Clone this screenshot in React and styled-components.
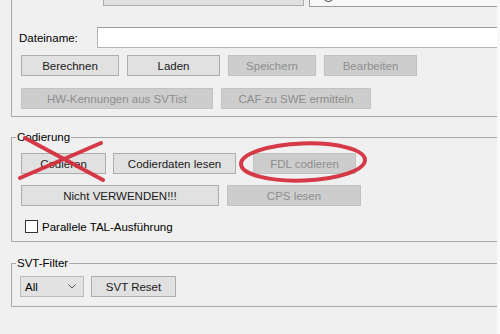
import styled, { createGlobalStyle } from 'styled-components';

const Global = createGlobalStyle`
  html, body {
    margin: 0;
    padding: 0;
    background: #f9f9f9;
  }
`;

const Page = styled.div`
  position: relative;
  width: 497px;
  height: 334px;
  overflow: hidden;
  box-sizing: border-box;
  padding-left: 11px;
  background: #f0f0f0;
  font-family: "Liberation Sans", Arial, sans-serif;
  font-size: 11.5px;
  color: #000;
`;

const TopGroup = styled.div`
  width: 520px;
  border-left: 1px solid #a9a9a9;
  border-bottom: 1px solid #a9a9a9;
  padding: 0 0 7px 9px;
`;

const Row = styled.div`
  display: flex;
  align-items: center;
  gap: 8px;
  margin-top: ${p => p.$mt || 0}px;
`;

const TopRow = styled.div`
  display: flex;
  height: 22px;
  margin-top: -15px;
`;

const Field = styled.div`
  flex: 1;
  margin-left: 5px;
  box-sizing: border-box;
  border: 1px solid #9c9c9c;
  background: #f7f7f7;
  display: flex;
  align-items: flex-end;
  padding: 0 0 0 13px;
`;

const Label = styled.span`
  width: 70px;
  margin-left: -2px;
`;

const Input = styled.div`
  flex: 1;
  height: 21px;
  box-sizing: border-box;
  background: #fff;
  border: 1px solid #b4b4b4;
  border-top-color: #9a9a9a;
`;

const Button = styled.button`
  box-sizing: border-box;
  width: ${p => p.$w}px;
  height: 21px;
  margin: 0 0 0 ${p => p.$ml || 0}px;
  padding: 0;
  flex: none;
  font-family: inherit;
  font-size: inherit;
  font-weight: 400;
  color: #1a1a1a;
  background: #e1e1e1;
  border: 1px solid #adadad;
  border-radius: 0;

  &:disabled {
    color: #8e8e8e;
    background: #cdcdcd;
    border-color: #c2c2c2;
  }
`;

const Group = styled.fieldset`
  width: 520px;
  box-sizing: border-box;
  margin: ${p => p.$mt}px 0 0;
  padding: 0;
  min-width: 0;
  border: 1px solid #a9a9a9;
`;

const Legend = styled.legend`
  margin-left: 4px;
  padding: 0 1px;
  line-height: 14px;
  font-size: 11.5px;
`;

const Body = styled.div`
  padding: ${p => p.$pt}px 0 ${p => p.$pb}px 9px;
`;

const CheckRow = styled.label`
  display: flex;
  align-items: center;
  gap: 4px;
  margin: 14px 0 0 4px;
  height: 13px;
`;

const Box = styled.span`
  width: 13px;
  height: 13px;
  box-sizing: border-box;
  border: 1px solid #333;
  background: #fff;
`;

const Select = styled.div`
  box-sizing: border-box;
  width: 64px;
  height: 21px;
  margin-left: -1px;
  display: flex;
  align-items: center;
  justify-content: space-between;
  padding: 0 7px 0 4px;
  background: #e2e2e2;
  border: 1px solid #bcbcbc;
`;

const Marks = styled.svg`
  position: absolute;
  left: 0;
  top: 0;
  pointer-events: none;
`;

export default function App() {
  return (
    <Page>
      <Global />
      <TopGroup>
        <TopRow>
          <Button $w={201} $ml={82} />
          <Field>
            <svg width="11" height="10" viewBox="0 0 11 10">
              <path d="M1 1 A4.5 4.5 0 0 0 10 1" fill="none" stroke="#444" strokeWidth="1.2" />
            </svg>
          </Field>
        </TopRow>
        <Row $mt={20}>
          <Label>Dateiname:</Label>
          <Input />
        </Row>
        <Row $mt={7}>
          <Button $w={98}>Berechnen</Button>
          <Button $w={93}>Laden</Button>
          <Button $w={88} disabled>Speichern</Button>
          <Button $w={93} disabled>Bearbeiten</Button>
        </Row>
        <Row $mt={12}>
          <Button $w={192} disabled>HW-Kennungen aus SVTist</Button>
          <Button $w={150} disabled>CAF zu SWE ermitteln</Button>
        </Row>
      </TopGroup>

      <Group $mt={13}>
        <Legend>Codierung</Legend>
        <Body $pt={9} $pb={8}>
          <Row>
            <Button $w={85}>Codieren</Button>
            <Button $w={123} $ml={-1}>Codierdaten lesen</Button>
            <Button $w={103} $ml={9} disabled>FDL codieren</Button>
          </Row>
          <Row $mt={11}>
            <Button $w={198}>Nicht VERWENDEN!!!</Button>
            <Button $w={134} disabled>CPS lesen</Button>
          </Row>
          <CheckRow>
            <Box />
            <span>Parallele TAL-Ausführung</span>
          </CheckRow>
        </Body>
      </Group>

      <Group $mt={14}>
        <Legend>SVT-Filter</Legend>
        <Body $pt={6} $pb={9}>
          <Row>
            <Select>
              <span>All</span>
              <svg width="8" height="5" viewBox="0 0 8 5">
                <path d="M0.5 0.5 L4 4 L7.5 0.5" fill="none" stroke="#5a5a5a" strokeWidth="1" />
              </svg>
            </Select>
            <Button $w={85} $ml={-1}>SVT Reset</Button>
          </Row>
        </Body>
      </Group>

      <Marks width="500" height="334" viewBox="0 0 500 334">
        <g stroke="#d42b3b" strokeWidth="4" strokeLinecap="round" fill="none" opacity="0.92">
          <path d="M25 138 L103 180" />
          <path d="M101 143 L20 178" />
          <ellipse cx="303" cy="162" rx="62" ry="18.5" transform="rotate(-2 303 162)" />
        </g>
      </Marks>
    </Page>
  );
}
